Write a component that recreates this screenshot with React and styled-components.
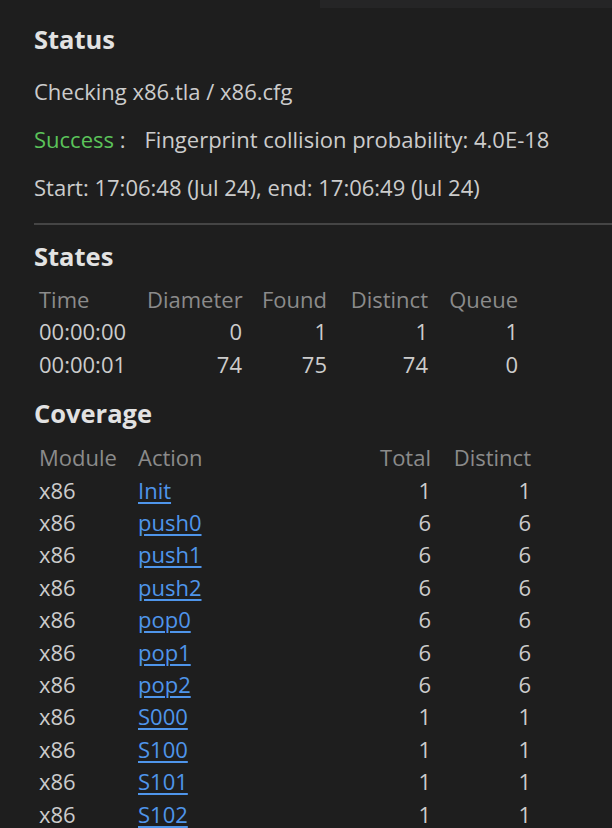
import React from 'react';
import styled, { createGlobalStyle } from 'styled-components';

const GlobalStyle = createGlobalStyle`
  html, body {
    margin: 0;
    padding: 0;
    background: #1e1e1e;
  }
  body {
    font-family: "Open Sans", "Noto Sans", sans-serif;
    color: #cccccc;
  }
`;

const stateCols = [
  { label: 'Time', width: 108, align: 'left' },
  { label: 'Diameter', width: 105, align: 'right' },
  { label: 'Found', width: 85, align: 'right' },
  { label: 'Distinct', width: 101, align: 'right' },
  { label: 'Queue', width: 90, align: 'right' },
];

const stateRows = [
  ['00:00:00', '0', '1', '1', '1'],
  ['00:00:01', '74', '75', '74', '0'],
];

const coverageCols = [
  { label: 'Module', width: 99, align: 'left' },
  { label: 'Action', width: 227, align: 'left' },
  { label: 'Total', width: 76, align: 'right' },
  { label: 'Distinct', width: 100, align: 'right' },
];

const coverageRows = [
  ['x86', 'Init', 1, 1],
  ['x86', 'push0', 6, 6],
  ['x86', 'push1', 6, 6],
  ['x86', 'push2', 6, 6],
  ['x86', 'pop0', 6, 6],
  ['x86', 'pop1', 6, 6],
  ['x86', 'pop2', 6, 6],
  ['x86', 'S000', 1, 1],
  ['x86', 'S100', 1, 1],
  ['x86', 'S101', 1, 1],
  ['x86', 'S102', 1, 1],
];

function App() {
  return (
    <>
      <GlobalStyle />
      <TopStrip>
        <TabEdge />
      </TopStrip>
      <Panel>
        <Heading>Status</Heading>
        <Line>Checking x86.tla / x86.cfg</Line>
        <Line>
          <Ok>Success</Ok> :<Message>Fingerprint collision probability: 4.0E-18</Message>
        </Line>
        <Line>Start: 17:06:48 (Jul 24), end: 17:06:49 (Jul 24)</Line>
        <Divider />

        <Heading $gap={16}>States</Heading>
        <Table $width={489} $gap={12}>
          <colgroup>
            {stateCols.map((c) => (
              <col key={c.label} style={{ width: c.width }} />
            ))}
          </colgroup>
          <thead>
            <tr>
              {stateCols.map((c) => (
                <Th key={c.label} $align={c.align}>{c.label}</Th>
              ))}
            </tr>
          </thead>
          <tbody>
            {stateRows.map((row) => (
              <tr key={row[0]}>
                {row.map((v, i) => (
                  <Td key={i} $align={stateCols[i].align}>{v}</Td>
                ))}
              </tr>
            ))}
          </tbody>
        </Table>

        <Heading $gap={18}>Coverage</Heading>
        <Table $width={502} $gap={13}>
          <colgroup>
            {coverageCols.map((c) => (
              <col key={c.label} style={{ width: c.width }} />
            ))}
          </colgroup>
          <thead>
            <tr>
              {coverageCols.map((c) => (
                <Th key={c.label} $align={c.align}>{c.label}</Th>
              ))}
            </tr>
          </thead>
          <tbody>
            {coverageRows.map(([mod, action, total, distinct]) => (
              <tr key={action}>
                <Td>{mod}</Td>
                <Td>
                  <ActionLink href="#">{action}</ActionLink>
                </Td>
                <Td $align="right">{total}</Td>
                <Td $align="right">{distinct}</Td>
              </tr>
            ))}
          </tbody>
        </Table>
      </Panel>
    </>
  );
}

const TopStrip = styled.div`
  display: flex;
  height: 8px;
`;

const TabEdge = styled.div`
  margin-left: auto;
  width: 292px;
  background: #252526;
`;

const Panel = styled.div`
  padding: 16px 0 0 34px;
  height: 804px;
  overflow: hidden;
`;

const Heading = styled.h2`
  margin: ${(p) => p.$gap || 14}px 0 0;
  font-size: 25.5px;
  line-height: 30px;
  font-weight: 700;
  color: #e2e2e2;
  &:first-child {
    margin-top: 0;
  }
`;

const Line = styled.div`
  font-size: 22px;
  line-height: 48px;
  white-space: nowrap;
  &:first-of-type {
    margin-top: 13px;
  }
`;

const Ok = styled.span`
  color: #5bc35a;
`;

const Message = styled.span`
  margin-left: 19px;
`;

const Divider = styled.hr`
  margin: 12px 0 0;
  border: 0;
  height: 2px;
  background: #454545;
`;

const Table = styled.table`
  margin-top: ${(p) => p.$gap}px;
  width: ${(p) => p.$width}px;
  table-layout: fixed;
  border-collapse: collapse;
  font-size: 22px;
`;

const Th = styled.th`
  padding: 0 5px;
  height: 32.4px;
  line-height: 32.4px;
  font-weight: 400;
  color: #8b8b8b;
  white-space: nowrap;
  text-align: ${(p) => p.$align || 'left'};
`;

const Td = styled.td`
  padding: 0 5px;
  height: 32.4px;
  line-height: 32.4px;
  white-space: nowrap;
  text-align: ${(p) => p.$align || 'left'};
`;

const ActionLink = styled.a`
  color: #4f95ea;
  text-decoration: underline;
  text-decoration-thickness: 2px;
  text-underline-offset: 3px;
`;

export default App;
